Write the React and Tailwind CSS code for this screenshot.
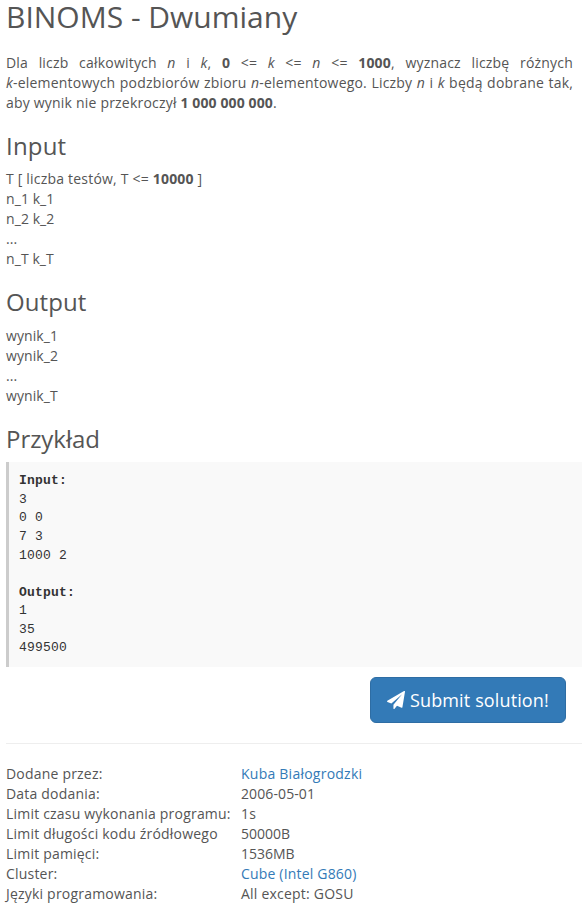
const rows = [
  ["Dodane przez:", "Kuba Białogrodzki", "tracking-[0.24px] text-[#337ab7]"],
  ["Data dodania:", "2006-05-01", "tracking-[0.1px]"],
  ["Limit czasu wykonania programu:", "1s", ""],
  ["Limit długości kodu źródłowego", "50000B", "tracking-normal"],
  ["Limit pamięci:", "1536MB", "tracking-normal"],
  ["Cluster:", "Cube (Intel G860)", "tracking-[0.18px] text-[#337ab7]"],
  ["Języki programowania:", "All except: GOSU", "tracking-[0.22px]"],
];

function PaperPlane() {
  return (
    <svg viewBox="0 0 1792 1792" className="size-[18px] shrink-0" fill="currentColor" aria-hidden="true">
      <path d="M1764 11q33 24 27 64l-256 1536q-5 29-32 45-14 8-31 8-11 0-24-5l-453-185-242 295q-18 23-49 23-13 0-22-4-19-7-30.500-23.500t-11.500-36.500v-349l864-1059-1069 925-395-162q-37-14-40-55-2-40 32-59l1664-960q15-9 32-9 20 0 36 11z" />
    </svg>
  );
}

export default function App() {
  return (
    <div className="h-[910px] w-[582px] overflow-hidden bg-white pl-[6px] font-['Open_Sans',sans-serif] text-[14px] leading-[20px] tracking-[0.2px] text-[#555]">
      <h1 className="text-[30px] leading-[33px] tracking-normal">BINOMS - Dwumiany</h1>
      <p className="mt-[20px] w-[567px] text-justify">
        Dla liczb całkowitych <em>n</em> i <em>k</em>, <b>0</b> &lt;= <em>k</em> &lt;= <em>n</em> &lt;= <b>1000</b>, wyznacz liczbę różnych <span className="whitespace-nowrap"><em>k</em>-elementowych</span> podzbiorów zbioru <em>n</em>-elementowego. Liczby <em>n</em> i <em>k</em> będą dobrane tak, aby wynik nie przekroczył <b className="tracking-[0.12px]">1 000 000 000</b>.
      </p>
      <h3 className="mt-[20px] mb-[10px] text-[24px] leading-[26px]">Input</h3>
      <p>
        T [ liczba testów, T &lt;= <b>10000</b> ]<br />
        <span className="tracking-[0.08px]">n_1 k_1<br />n_2 k_2<br />...<br />n_T k_T</span>
      </p>
      <h3 className="mt-[20px] mb-[11px] text-[24px] leading-[26px] tracking-[0.1px]">Output</h3>
      <p className="tracking-[0.08px]">wynik_1<br />wynik_2<br />...<br />wynik_T</p>
      <h3 className="mt-[20px] mb-[10px] text-[24px] leading-[26px] tracking-[-0.05px]">Przykład</h3>
      <pre className="h-[205px] border-l-3 border-[#ccc] bg-[#f9f9f9] pt-[10.25px] pl-[10px] font-['Liberation_Mono',monospace] text-[13px] leading-[18.57px] text-[#333]">
        <b>Input:</b>{"\n3\n0 0\n7 3\n1000 2\n\n"}<b>Output:</b>{"\n1\n35\n499500"}
      </pre>
      <div className="mt-[10px] mr-[16px] flex justify-end">
        <button className="flex h-[46px] w-[196px] items-center gap-[5px] rounded-[6px] border border-[#2e6da4] bg-[#337ab7] pl-[16px] text-[18px] leading-[24px] tracking-[0.13px] whitespace-nowrap text-white">
          <PaperPlane />Submit solution!
        </button>
      </div>
      <hr className="mt-[20px] mb-[20px] border-[#eee]" />
      <dl className="grid grid-cols-[235px_1fr]">
        {rows.map(([label, value, style]) => (
          <div key={label} className="contents">
            <dt>{label}</dt>
            <dd className={style}>{value}</dd>
          </div>
        ))}
      </dl>
    </div>
  );
}
